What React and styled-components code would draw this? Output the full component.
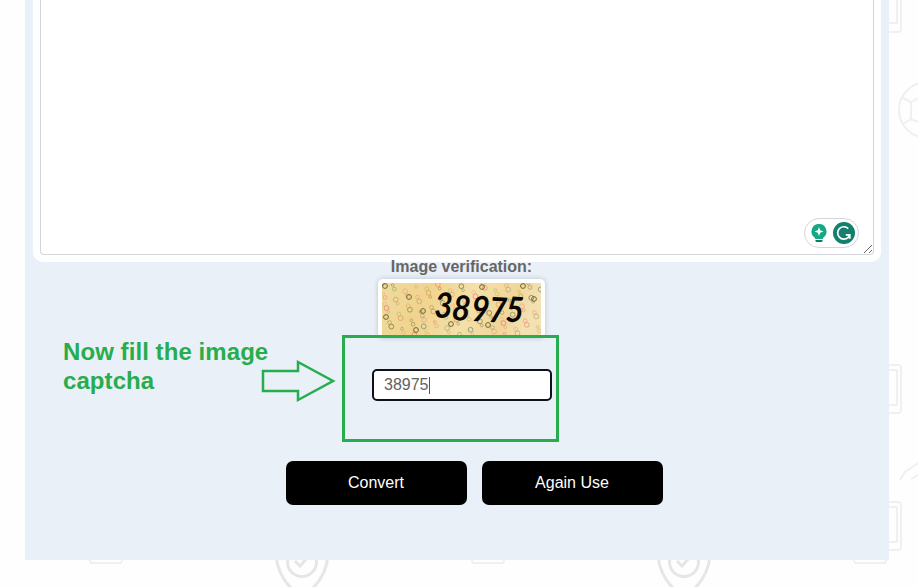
import React from "react";
import styled, { createGlobalStyle } from "styled-components";

const GlobalStyle = createGlobalStyle`
  *, *::before, *::after { box-sizing: border-box; }
  body { margin: 0; background: #fefefe; overflow: hidden; font-family: "Liberation Sans", Arial, sans-serif; }
`;

const Page = styled.main`
  position: relative;
  width: 918px;
  height: 587px;
  overflow: hidden;
`;

const Backdrop = styled.svg`
  position: absolute;
  inset: 0;
`;

const Panel = styled.section`
  position: relative;
  display: flex;
  flex-direction: column;
  width: 864px;
  height: 560px;
  margin-left: 25px;
  background: #eaf0f7;
`;

const Card = styled.div`
  flex: none;
  display: flex;
  height: 262px;
  margin: 0 8px;
  padding: 0 7px 7px;
  background: #fff;
  border-radius: 0 0 10px 10px;
`;

const Editor = styled.div`
  flex: 1;
  display: flex;
  justify-content: flex-end;
  align-items: flex-end;
  border: 1px solid #d3d5d8;
  border-top: 0;
  border-radius: 0 0 4px 4px;
`;

const Assistant = styled.div`
  display: flex;
  align-items: center;
  gap: 5px;
  width: 55px;
  height: 30px;
  margin-bottom: 6px;
  padding-left: 5px;
  border: 1px solid #d3d5dc;
  border-radius: 15px;
  background: #fff;
`;

const Grip = styled.svg`
  margin: 0 0 0 4px;
`;

const Form = styled.form`
  display: flex;
  flex-direction: column;
  align-items: center;
  padding-left: 9px;
`;

const Label = styled.label`
  height: 17px;
  margin-top: -5px;
  line-height: 19px;
  font-size: 16px;
  font-weight: 700;
  color: #666;
`;

const Captcha = styled.div`
  width: 167px;
  height: 59px;
  margin-top: 5px;
  padding: 4px;
  border-radius: 5px;
  background: #fff;
  box-shadow: 0 0 5px rgba(60, 70, 90, 0.28);
  svg { display: block; }
`;

const CodeField = styled.div`
  display: flex;
  align-items: center;
  width: 180px;
  height: 32px;
  margin-top: 31px;
  padding-left: 10.5px;
  border: 2px solid #101018;
  border-radius: 5px;
  background: #fff;
  font-size: 16px;
  color: #626262;
`;

const Caret = styled.span`
  width: 1px;
  height: 17px;
  background: #555;
`;

const Actions = styled.div`
  display: flex;
  gap: 15px;
  margin: 60px 0 0 26px;
`;

const Button = styled.button`
  width: 181px;
  height: 44px;
  padding: 0 1px 0 0;
  border: 0;
  border-radius: 7px;
  background: #000;
  color: #fff;
  font: 16px "Liberation Sans", Arial, sans-serif;
`;

const Note = styled.p`
  position: absolute;
  left: 63px;
  top: 337px;
  width: 225px;
  margin: 0;
  font-size: 24px;
  line-height: 29px;
  letter-spacing: 0.07px;
  font-weight: 700;
  color: #27ad4d;
`;

const Arrow = styled.svg`
  position: absolute;
  left: 260px;
  top: 358px;
`;

const Highlight = styled.div`
  position: absolute;
  left: 342px;
  top: 335px;
  width: 217px;
  height: 107px;
  border: 3px solid #27ad4d;
`;

const phones = [-45, 365, 502];
const shields = [302, 684];
const feet = [89, 471, 853];

const ringColors = ["#8c8340", "#e88d70", "#719068", "#d7a24d", "#e77b70", "#77703c", "#b5a878", "#efa181"];
const rings = Array.from({ length: 110 }, (_, i) => ({
  x: (i * 0.7548777 * 159) % 159,
  y: (i * 0.5698403 * 52) % 52,
  r: i % 3 === 0 ? 2.4 : i % 3 === 1 ? 1.9 : 1.4,
  color: ringColors[(i * 5 + Math.floor(i / 8)) % 8],
  opacity: i % 3 === 0 ? 0.8 : 0.5,
}));
const darkRings = [[3, 3], [100, 4], [141, 3], [27, 14], [41, 28], [4, 34], [152, 16], [69, 41], [34, 47], [106, 42]];

const digits = [
  { value: "3", x: 52, y: 34.5, turn: 2 },
  { value: "8", x: 69, y: 36.5, turn: 6 },
  { value: "9", x: 89, y: 38, turn: 2 },
  { value: "7", x: 106, y: 39, turn: 3 },
  { value: "5", x: 123, y: 38.5, turn: 3 },
];

function Pattern() {
  return (
    <Backdrop width="918" height="587" fill="none" stroke="#f0f0f0" strokeWidth="2">
      {phones.map((y) => (
        <g key={y}>
          <rect x="870" y={y} width="31" height={y < 0 ? 77 : 48} rx="3" />
          <path d={`M880 ${y + 5}H897V${y < 0 ? 23 : y + 40}H880`} />
        </g>
      ))}
      <circle cx="927" cy="110" r="28" />
      <path d="M901 97l10 5v17l-8 5M911 102l7-4M911 119l7 3M900 480l5-8 13-9M911 479l7-4" />
      {feet.map((x) => (
        <path key={x} d={`M${x} 558l2 5h30l2-5`} />
      ))}
      {shields.map((x) => (
        <g key={x} stroke="#e6e6e6">
          <path strokeWidth="3" d={`M${x - 26} 555C${x - 25} 571 ${x - 17} 583 ${x - 7} 592M${x + 26} 555C${x + 25} 571 ${x + 17} 583 ${x + 7} 592`} />
          <circle cx={x} cy="562" r="14.5" strokeWidth="3" />
          <path strokeWidth="3" d={`M${x - 7} 561l5 5 8-9`} />
        </g>
      ))}
    </Backdrop>
  );
}

function CaptchaImage() {
  return (
    <svg width="159" height="53" viewBox="0 0 159 53">
      <defs>
        <linearGradient id="sand" x1="0" y1="0" x2="1" y2="0.15">
          <stop offset="0" stopColor="#eddc9f" />
          <stop offset="0.3" stopColor="#f1d38e" />
          <stop offset="0.6" stopColor="#f3e1a9" />
          <stop offset="0.85" stopColor="#f1d699" />
          <stop offset="1" stopColor="#f3e1b2" />
        </linearGradient>
      </defs>
      <rect width="159" height="53" fill="url(#sand)" />
      <g fill="none">
        {rings.map((ring, i) => (
          <circle key={i} cx={ring.x} cy={ring.y} r={ring.r} stroke={ring.color} opacity={ring.opacity} strokeWidth="0.9" />
        ))}
        {darkRings.map(([x, y]) => (
          <circle key={`${x}-${y}`} cx={x} cy={y} r="2.4" stroke="#6f6630" strokeWidth="1" />
        ))}
      </g>
      <g fontFamily="Lato, sans-serif" fontSize="35" fontWeight="700" fontStyle="italic" fill="#080704">
        {digits.map((digit) => (
          <text key={digit.value} transform={`translate(${digit.x} ${digit.y}) rotate(${digit.turn}) scale(.9 1)`}>{digit.value}</text>
        ))}
      </g>
    </svg>
  );
}

function AssistantIcons() {
  return (
    <Assistant>
      <svg width="18" height="20" viewBox="0 0 18 20">
        <path d="M9 1a7.5 7.5 0 0 0-4.2 13.7L5.3 16h7.4l.5-1.3A7.5 7.5 0 0 0 9 1Z" fill="#14a783" />
        <path d="M5.5 17h7v1q0 1-1 1h-5q-1 0-1-1Z" fill="#087f65" />
        <path d="M9 4l1.2 3.3L13.5 8.5l-3.3 1.2L9 13 7.8 9.7 4.5 8.5l3.3-1.2Z" fill="#fff" />
      </svg>
      <svg width="22" height="22" viewBox="0 0 22 22">
        <circle cx="11" cy="11" r="11" fill="#12806c" />
        <path d="M15.3 6.6A6.2 6.2 0 1 0 15 15.6L16.6 13.2M12.8 12.8h4v4" fill="none" stroke="#fff" strokeWidth="1.7" />
      </svg>
    </Assistant>
  );
}

export default function App() {
  return (
    <Page>
      <GlobalStyle />
      <Pattern />
      <Panel>
        <Card>
          <Editor>
            <AssistantIcons />
            <Grip width="10" height="10" viewBox="0 0 10 10" stroke="#666" strokeWidth="1">
              <path d="M1 9L9 1M6 9L9 6" />
            </Grip>
          </Editor>
        </Card>
        <Form>
          <Label>Image verification:</Label>
          <Captcha><CaptchaImage /></Captcha>
          <CodeField>38975<Caret /></CodeField>
          <Actions>
            <Button type="button">Convert</Button>
            <Button type="button">Again Use</Button>
          </Actions>
        </Form>
      </Panel>
      <Note>Now fill the image captcha</Note>
      <Arrow width="78" height="48" fill="none" stroke="#27ad4d" strokeWidth="2.5">
        <path d="M3 13H38V4L73 23L38 42V33H3Z" />
      </Arrow>
      <Highlight />
    </Page>
  );
}
